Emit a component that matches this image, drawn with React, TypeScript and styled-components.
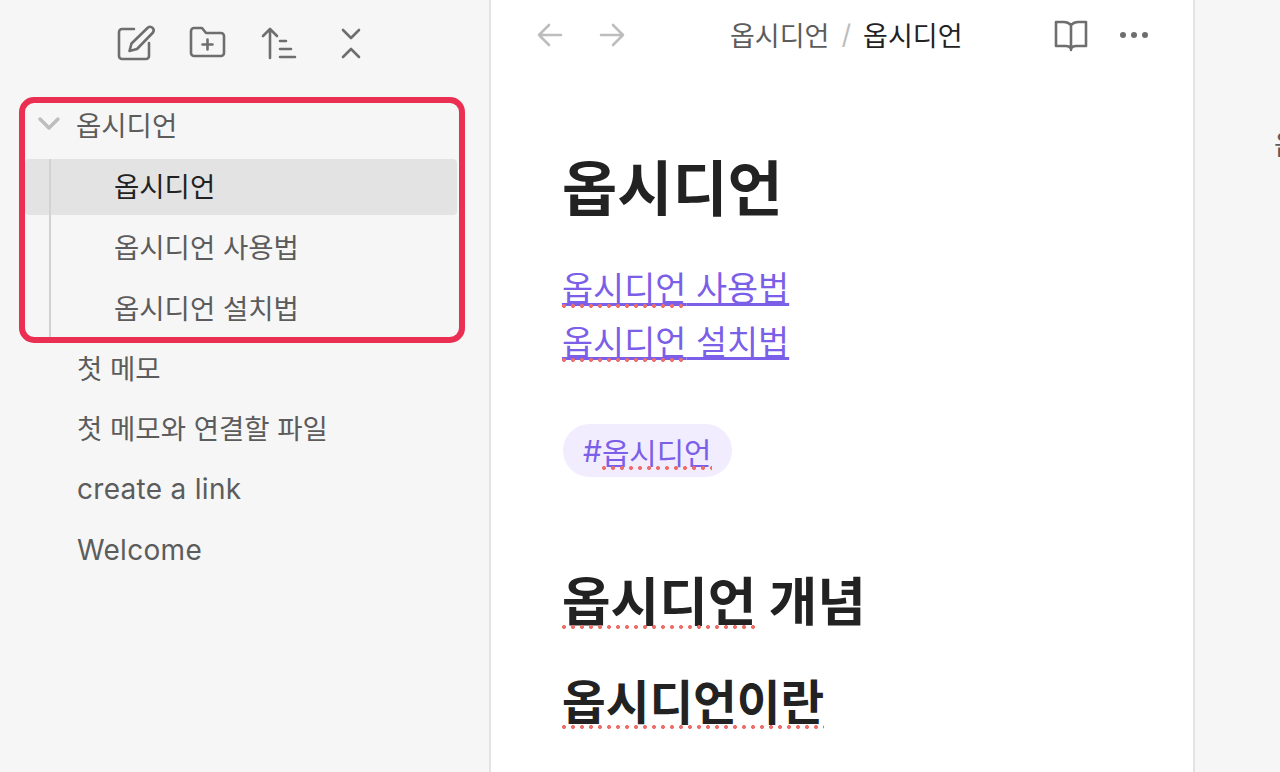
import React from 'react';
import styled, { createGlobalStyle } from 'styled-components';

const colors = {
  sidebar: '#f6f6f6',
  border: '#e3e3e3',
  text: '#222222',
  muted: '#5c5c5c',
  icon: '#6e6e6e',
  faint: '#bdbdbd',
  accent: '#7b5fe8',
  tagBg: '#f1edfe',
  spell: '#ee6f6a',
  annotate: '#ea2f52',
  active: '#e3e3e3',
};

const fontStack = `Inter, "Noto Sans CJK KR", "Noto Sans", sans-serif`;

const GlobalStyle = createGlobalStyle`
  * {
    margin: 0;
    padding: 0;
    box-sizing: border-box;
  }

  html, body {
    width: 1280px;
    height: 772px;
    overflow: hidden;
  }

  body {
    font-family: ${fontStack};
    background: #ffffff;
    color: ${colors.text};
  }
`;

const Page = styled.div`
  display: flex;
  width: 1280px;
  height: 772px;
  overflow: hidden;
`;

const Sidebar = styled.aside`
  flex: 0 0 491px;
  height: 100%;
  background: ${colors.sidebar};
  border-right: 2px solid ${colors.border};
`;

const SidebarTools = styled.div`
  display: flex;
  align-items: center;
  height: 97px;
  padding: 0 0 11px 113px;
  gap: 28px;
`;

const ToolIcon = styled.svg`
  display: block;
  flex: none;
  fill: none;
  stroke: ${colors.icon};
  stroke-width: 2.6;
  stroke-linecap: round;
  stroke-linejoin: round;
`;

const DotsIcon = styled.svg`
  display: block;
  flex: none;
  fill: ${colors.icon};
`;

const Tree = styled.div`
  display: flex;
  flex-direction: column;
`;

const FolderBox = styled.div`
  width: 446px;
  height: 246px;
  margin-left: 19px;
  border: 6px solid ${colors.annotate};
  border-radius: 15px;
`;

const FolderTitle = styled.div`
  display: flex;
  align-items: center;
  height: 44px;
  margin-bottom: 12px;
  padding: 0 0 2px 12px;
  gap: 15px;
  font-size: 27.5px;
  color: ${colors.muted};
`;

const Chevron = styled.svg`
  display: block;
  flex: none;
  fill: none;
  stroke: ${colors.faint};
  stroke-width: 3.4;
  stroke-linecap: round;
  stroke-linejoin: round;
`;

const FolderChildren = styled.div`
  display: flex;
  flex-direction: column;
  gap: 5px;
  width: 432px;
  height: 178px;
  position: relative;

  &::after {
    content: '';
    position: absolute;
    left: 24px;
    top: 0;
    bottom: 0;
    width: 2px;
    background: #d2d2d2;
  }
`;

const ChildRow = styled.div<{ $active?: boolean }>`
  display: flex;
  align-items: center;
  height: 56px;
  padding: 0 0 4px 89px;
  font-size: 27.5px;
  border-radius: 4px;
  color: ${(p) => (p.$active ? colors.text : colors.muted)};
  background: ${(p) => (p.$active ? colors.active : 'transparent')};
`;

const RootFiles = styled.div`
  display: flex;
  flex-direction: column;
  gap: 10.5px;
  padding-left: 77px;
`;

const RootRow = styled.div`
  display: flex;
  align-items: center;
  height: 50px;
  padding-bottom: 3px;
  font-size: 27.5px;
  color: ${colors.muted};
`;

const LatinRow = styled(RootRow)`
  padding-bottom: 0;
  font-size: 28px;
  letter-spacing: 0.3px;
`;

const Main = styled.main`
  flex: 0 0 704px;
  height: 100%;
  overflow: hidden;
  border-right: 2px solid ${colors.border};
`;

const TopBar = styled.header`
  display: flex;
  align-items: center;
  height: 70px;
  padding: 0 44px 0 45px;
`;

const NavButtons = styled.div`
  display: flex;
  gap: 34px;
  width: 194px;
`;

const NavIcon = styled.svg`
  display: block;
  fill: none;
  stroke: ${colors.faint};
  stroke-width: 2.6;
  stroke-linecap: round;
  stroke-linejoin: round;
`;

const Crumbs = styled.div`
  display: flex;
  align-items: center;
  gap: 12px;
  padding-bottom: 2px;
  font-size: 27px;
  flex: 1;
`;

const CrumbParent = styled.span`
  color: ${colors.muted};
`;

const CrumbSep = styled.span`
  color: ${colors.faint};
`;

const CrumbCurrent = styled.span`
  color: ${colors.text};
`;

const ViewActions = styled.div`
  display: flex;
  align-items: center;
  gap: 30px;
`;

const Note = styled.article`
  display: flex;
  flex-direction: column;
  align-items: flex-start;
  padding: 0 0 0 71px;
`;

const Title = styled.h1`
  font-size: 60px;
  font-weight: 700;
  line-height: 80px;
  margin-top: 79px;
`;

const LinkList = styled.div`
  display: flex;
  flex-direction: column;
  align-items: flex-start;
  margin-top: 33px;
`;

const NoteLink = styled.a`
  font-size: 33.8px;
  line-height: 54px;
  height: 54px;
  color: ${colors.accent};
  text-decoration: underline;
  text-decoration-thickness: 3px;
  text-underline-offset: 2px;
`;

const Misspelled = styled.span<{ $lift: number }>`
  position: relative;

  &::after {
    content: '';
    position: absolute;
    left: 0;
    right: 0;
    bottom: ${(p) => p.$lift}px;
    height: 4px;
    background-image: radial-gradient(circle at 2px 2px, ${colors.spell} 1.9px, transparent 2.2px);
    background-size: 9px 4px;
    background-repeat: repeat-x;
  }
`;

const Tag = styled.span`
  display: flex;
  align-items: center;
  height: 53px;
  margin: 54px 0 0 1px;
  padding: 0 20px;
  border-radius: 27px;
  background: ${colors.tagBg};
  color: ${colors.accent};
  font-size: 29.8px;
`;

const HeadingTwo = styled.h2`
  font-size: 52.8px;
  font-weight: 700;
  line-height: 70px;
  margin-top: 90px;
`;

const HeadingThree = styled.h3`
  font-size: 47.5px;
  font-weight: 700;
  line-height: 64px;
  margin-top: 34px;
`;

const RightPanel = styled.aside`
  flex: 1;
  height: 100%;
  overflow: hidden;
  background: ${colors.sidebar};
  padding: 124px 0 0 79px;
  font-size: 27px;
  color: ${colors.muted};
  white-space: nowrap;
`;

export default function App() {
  return (
    <Page>
      <GlobalStyle />
      <Sidebar>
        <SidebarTools>
          <ToolIcon width="44" height="44" viewBox="0 0 44 44">
            <path d="M21 8H9a3 3 0 0 0-3 3v24a3 3 0 0 0 3 3h24a3 3 0 0 0 3-3V22" />
            <path d="M35 6.500a3.600 3.600 0 0 1 5 5L24 28l-7.500 2 2-7.500z" />
          </ToolIcon>
          <ToolIcon width="44" height="44" viewBox="0 0 44 44">
            <path d="M9 7h8l4 5h15a3 3 0 0 1 3 3v17a3 3 0 0 1-3 3H9a3 3 0 0 1-3-3V10a3 3 0 0 1 3-3z" />
            <path d="M22.500 18.500v10M17.500 23.500h10" />
          </ToolIcon>
          <ToolIcon width="44" height="44" viewBox="0 0 44 44">
            <path d="M13 37V8M6 15l7-7 7 7" />
            <path d="M23 20h6M23 28h11M23 36h15" />
          </ToolIcon>
          <ToolIcon width="44" height="44" viewBox="0 0 44 44">
            <path d="M14 9l8 8 8-8M14 36l8-8 8 8" />
          </ToolIcon>
        </SidebarTools>
        <Tree>
          <FolderBox>
            <FolderTitle>
              <Chevron width="24" height="24" viewBox="0 0 24 24">
                <path d="M3 7l9 9 9-9" />
              </Chevron>
              옵시디언
            </FolderTitle>
            <FolderChildren>
              <ChildRow $active>옵시디언</ChildRow>
              <ChildRow>옵시디언 사용법</ChildRow>
              <ChildRow>옵시디언 설치법</ChildRow>
            </FolderChildren>
          </FolderBox>
          <RootFiles>
            <RootRow>첫 메모</RootRow>
            <RootRow>첫 메모와 연결할 파일</RootRow>
            <LatinRow>create a link</LatinRow>
            <LatinRow>Welcome</LatinRow>
          </RootFiles>
        </Tree>
      </Sidebar>
      <Main>
        <TopBar>
          <NavButtons>
            <NavIcon width="28" height="28" viewBox="0 0 28 28">
              <path d="M25 14H3M13 4L3 14l10 10" />
            </NavIcon>
            <NavIcon width="28" height="28" viewBox="0 0 28 28">
              <path d="M3 14h22M15 4l10 10-10 10" />
            </NavIcon>
          </NavButtons>
          <Crumbs>
            <CrumbParent>옵시디언</CrumbParent>
            <CrumbSep>/</CrumbSep>
            <CrumbCurrent>옵시디언</CrumbCurrent>
          </Crumbs>
          <ViewActions>
            <ToolIcon width="36" height="36" viewBox="0 0 36 36">
              <path d="M18 8c-2-2-4-3-7-3H3v24h10c2.500 0 4 1 5 2.500 1-1.500 2.500-2.500 5-2.500h10V5h-8c-3 0-5 1-7 3zM18 8v25" />
            </ToolIcon>
            <DotsIcon width="30" height="30" viewBox="0 0 30 30">
              <circle cx="4" cy="15" r="3" />
              <circle cx="15" cy="15" r="3" />
              <circle cx="26" cy="15" r="3" />
            </DotsIcon>
          </ViewActions>
        </TopBar>
        <Note>
          <Title>옵시디언</Title>
          <LinkList>
            <NoteLink>
              <Misspelled $lift={1}>옵시디언</Misspelled> 사용법
            </NoteLink>
            <NoteLink>
              <Misspelled $lift={1}>옵시디언</Misspelled> 설치법
            </NoteLink>
          </LinkList>
          <Tag>
            #<Misspelled $lift={3}>옵시디언</Misspelled>
          </Tag>
          <HeadingTwo>
            <Misspelled $lift={5}>옵시디언</Misspelled> 개념
          </HeadingTwo>
          <HeadingThree>
            <Misspelled $lift={2}>옵시디언이란</Misspelled>
          </HeadingThree>
        </Note>
      </Main>
      <RightPanel>옵시디언</RightPanel>
    </Page>
  );
}
